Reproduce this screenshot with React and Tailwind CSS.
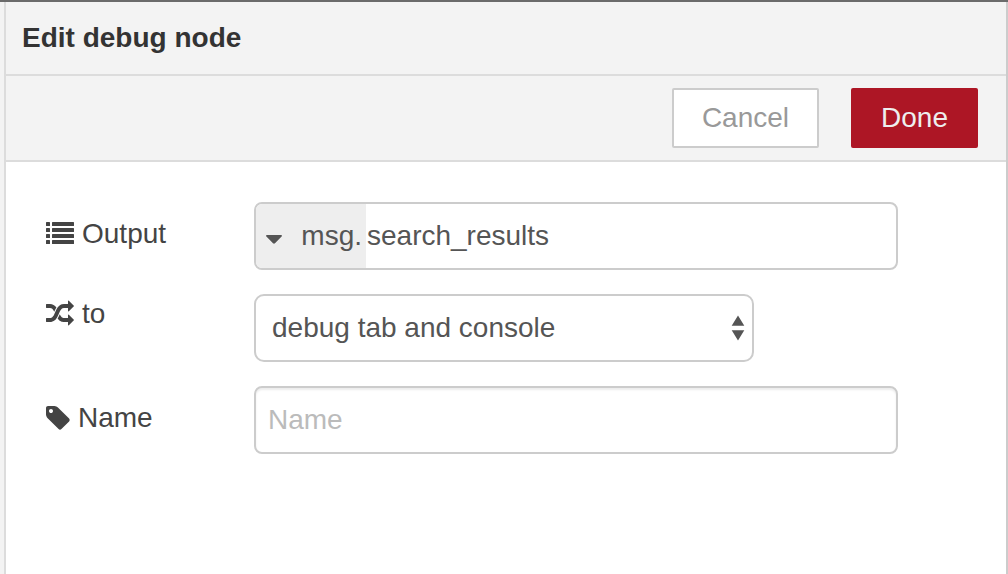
import { useState } from "react";

function ListIcon() {
  return (
    <svg className="h-7 w-7 shrink-0" viewBox="0 0 28 28" fill="currentColor" aria-hidden="true">
      {[2, 8, 14, 20].map((y) => (
        <g key={y}>
          <rect x="0" y={y} width="4" height="4" rx="0.5" />
          <rect x="6" y={y} width="22" height="4" rx="0.5" />
        </g>
      ))}
    </svg>
  );
}

function ShuffleIcon() {
  return (
    <svg className="h-7 w-7 shrink-0" viewBox="0 0 1792 1792" fill="currentColor" aria-hidden="true">
      <path d="M666 481q-60 92-137 273-22-45-37-72.5t-40.5-63.5-51-56.5-63-35-81.5-14.5h-224q-14 0-23-9t-9-23v-192q0-14 9-23t23-9h224q250 0 410 225zm1126 799q0 14-9 23l-320 320q-9 9-23 9-13 0-22.5-9.5t-9.5-22.5v-192q-32 0-85 .5t-81 1-73-1-71-5-64-10.5-63-18.5-58-28.5-59-40-55-53.5-56-69.5q59-93 136-273 22 45 37 72.5t40.5 63.5 51 56.5 63 35 81.5 14.5h256v-192q0-14 9-23t23-9q12 0 24 10l319 319q9 9 9 23zm0-896q0 14-9 23l-320 320q-9 9-23 9-13 0-22.5-9.5t-9.5-22.5v-192h-256q-48 0-87 15t-69 45-51 61.5-45 77.5q-32 62-78 171-29 66-49.5 111t-54 105-64 100-74 83-90 68.5-106.5 42-128 16.5h-224q-14 0-23-9t-9-23v-192q0-14 9-23t23-9h224q48 0 87-15t69-45 51-61.5 45-77.5q32-62 78-171 29-66 49.5-111t54-105 64-100 74-83 90-68.5 106.5-42 128-16.5h256v-192q0-14 9-23t23-9q12 0 24 10l319 319q9 9 9 23z" />
    </svg>
  );
}

function TagIcon() {
  return (
    <svg className="h-7 w-6 shrink-0" viewBox="128 0 1536 1792" fill="currentColor" aria-hidden="true">
      <path d="M576 448q0-53-37.5-90.5t-90.5-37.5-90.5 37.5-37.5 90.5 37.5 90.5 90.5 37.5 90.5-37.5 37.5-90.5zm1067 576q0 53-37 90l-491 492q-39 37-91 37-53 0-90-37l-715-716q-38-37-64.5-101t-26.5-117v-416q0-52 38-90t90-38h416q53 0 117 26.5t102 64.5l715 714q37 39 37 91z" />
    </svg>
  );
}

export default function App() {
  const [property, setProperty] = useState("search_results");
  const [target, setTarget] = useState("both");
  const [name, setName] = useState("");

  return (
    <div className="flex min-h-screen flex-col border-t-2 border-[#6b6b6b] bg-[#f3f3f3] pl-1 font-['Liberation_Sans',Arial,sans-serif] text-[28px] leading-8 text-[#555]">
      <main className="flex flex-1 flex-col border-x-2 border-l-[#dcdcdc] border-r-[#ccc] bg-white">
        <header className="border-b-2 border-[#dcdcdc] bg-[#f3f3f3] px-4 py-5">
          <h1 className="font-bold text-[#333]">Edit debug node</h1>
        </header>

        <div className="flex justify-end gap-8 border-b-2 border-[#dcdcdc] bg-[#f3f3f3] px-7 py-3">
          <button type="button" className="h-15 rounded-xs border-2 border-[#ccc] bg-white px-7 text-[#999]">
            Cancel
          </button>
          <button type="button" className="h-15 rounded-xs border-2 border-[#ad1625] bg-[#ad1625] px-7 text-[#eee]">
            Done
          </button>
        </div>

        <form className="flex flex-col gap-6 px-10 py-10" onSubmit={(e) => e.preventDefault()}>
          <div className="flex items-start">
            <label htmlFor="output" className="flex h-16 w-52 shrink-0 items-center gap-2 text-[#444]">
              <ListIcon />
              Output
            </label>
            <div className="flex h-17 w-7/10 overflow-hidden rounded-lg border-2 border-[#ccc] bg-white">
              <button
                type="button"
                className="flex w-[110px] shrink-0 items-center justify-between bg-[#eee] pr-1 pl-2.5"
                aria-haspopup="menu"
              >
                <svg className="h-6 w-4 shrink-0" viewBox="0 0 16 24" fill="currentColor" aria-hidden="true">
                  <path d="M1 11h14c1 0 1.300.8.6 1.500L9 19.200c-.6.6-1.400.6-2 0L.4 12.500C-.3 11.800 0 11 1 11z" />
                </svg>
                msg.
              </button>
              <input
                id="output"
                type="text"
                value={property}
                onChange={(e) => setProperty(e.target.value)}
                className="min-w-0 flex-1 px-px outline-none"
              />
            </div>
          </div>

          <div className="flex items-start">
            <label htmlFor="target" className="flex h-10 w-52 shrink-0 items-center gap-2 text-[#444]">
              <ShuffleIcon />
              to
            </label>
            <div className="relative w-[500px]">
              <select
                id="target"
                value={target}
                onChange={(e) => setTarget(e.target.value)}
                className="h-17 w-full appearance-none rounded-[10px] border-2 border-[#ccc] bg-white pr-8 pl-4 outline-none"
              >
                <option value="tab">debug tab</option>
                <option value="both">debug tab and console</option>
              </select>
              <svg
                className="pointer-events-none absolute top-5 right-2 h-7 w-4"
                viewBox="0 0 16 28"
                fill="currentColor"
                aria-hidden="true"
              >
                <path d="M8 1.500 14.300 11.700H1.700zM8 26.500 14.300 16.300H1.700z" />
              </svg>
            </div>
          </div>

          <div className="flex items-start">
            <label htmlFor="name" className="flex h-16 w-52 shrink-0 items-center gap-2 text-[#444]">
              <TagIcon />
              Name
            </label>
            <input
              id="name"
              type="text"
              placeholder="Name"
              value={name}
              onChange={(e) => setName(e.target.value)}
              className="h-17 w-7/10 rounded-lg border-2 border-[#ccc] bg-white px-3 shadow-[inset_0_2px_2px_rgba(0,0,0,0.075)] outline-none placeholder:text-[#bbb]"
            />
          </div>
        </form>
      </main>
    </div>
  );
}
